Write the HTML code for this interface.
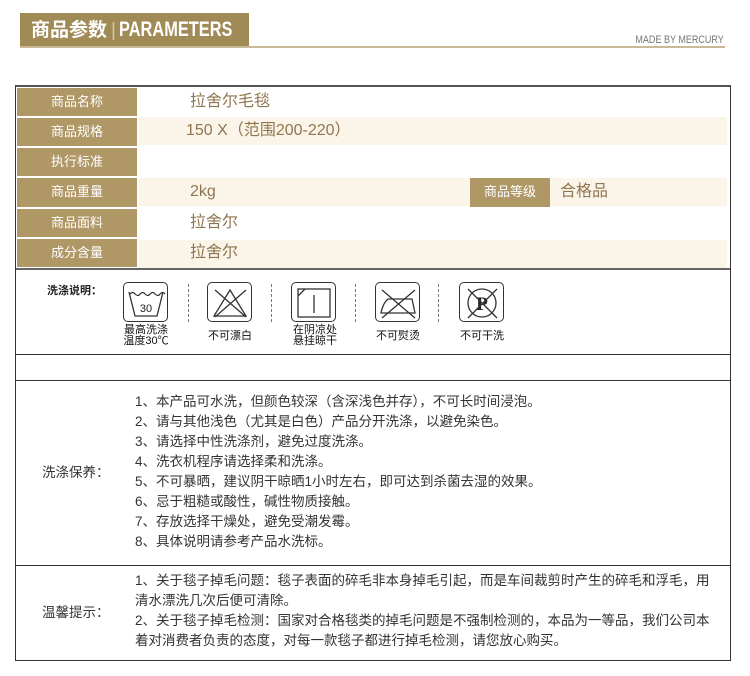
<!DOCTYPE html>
<html><head><meta charset="utf-8"><style>
*{margin:0;padding:0;box-sizing:border-box}
body{width:750px;height:676px;background:#fff;position:relative;font-family:"Liberation Sans","Noto Sans CJK SC",sans-serif;overflow:hidden}
.a{position:absolute}
.lab{position:absolute;left:17px;width:120px;height:28px;background:#b09766;color:#fff;font-size:13px;line-height:28px;text-align:center}
.val{position:absolute;left:190px;color:#8f7650;font-size:16px;line-height:28px}
.cream{position:absolute;left:139px;width:588px;height:28px;background:#fbf4e8}
.ic{position:absolute;top:282px;width:45px;height:40px;border:1.5px solid #333;border-radius:5px}
.ic svg{position:absolute;left:0;top:0}
.il{position:absolute;font-size:11px;color:#111;text-align:center;line-height:11px;width:70px}
.dash{position:absolute;top:284px;height:38px;border-left:1px dashed #777}
.txt{position:absolute;left:135px;font-size:13.5px;color:#333;line-height:20px}
</style></head><body>
<div class="a" style="left:20px;top:13px;width:229px;height:34px;background:#a08a56"></div>
<div class="a" style="left:31px;top:17px;color:#fff;font-size:19px;font-weight:bold;line-height:26px;white-space:nowrap">商品参数<span style="color:#d8c9a6;font-weight:normal;margin:0 3px 0 4px">|</span><span style="display:inline-block;font-size:21px;transform:scaleX(0.78);transform-origin:left center">PARAMETERS</span></div>
<div class="a" style="left:20px;top:46px;width:705px;height:2px;background:#c9b996"></div>
<div class="a" style="left:600px;top:34px;width:124px;text-align:right;font-size:11px;color:#777;white-space:nowrap"><span style="display:inline-block;transform:scaleX(0.82);transform-origin:right center">MADE BY MERCURY</span></div>

<div class="a" style="left:15px;top:85px;width:716px;height:576px;border:1px solid #333;border-top:2px solid #555"></div>
<div class="a" style="left:16px;top:268px;width:714px;height:2px;background:#666"></div>

<div class="cream" style="top:117px"></div>
<div class="cream" style="top:178px"></div>
<div class="cream" style="top:240px"></div>

<div class="lab" style="top:88px">商品名称</div>
<div class="lab" style="top:118px">商品规格</div>
<div class="lab" style="top:148px">执行标准</div>
<div class="lab" style="top:178px;height:29px">商品重量</div>
<div class="lab" style="top:209px">商品面料</div>
<div class="lab" style="top:239px">成分含量</div>
<div class="lab" style="top:178px;left:470px;width:80px;height:29px">商品等级</div>

<div class="val" style="top:88px">拉舍尔毛毯</div>
<div class="val" style="top:117px;left:186px">150 X（范围200-220）</div>
<div class="val" style="top:178px">2kg</div>
<div class="val" style="top:178px;left:560px">合格品</div>
<div class="val" style="top:209px">拉舍尔</div>
<div class="val" style="top:239px">拉舍尔</div>

<div class="a" style="left:47px;top:282px;font-size:11px;font-weight:bold;color:#222">洗涤说明：</div>

<div class="ic" style="left:123px"><svg width="45" height="40"><path d="M6 11 q3 -3 5 0 q3 3 5 0 q3 -3 5 0 q3 3 5 0 q3 -3 5 0 q3 3 5 0 q3-3 5 0" fill="none" stroke="#333" stroke-width="1.2"/><path d="M5 9 L11 33 L33 33 L39 9" fill="none" stroke="#333" stroke-width="1.3"/><text x="22" y="29" font-size="11" text-anchor="middle" font-family="Liberation Sans" fill="#222">30</text></svg></div>
<div class="dash" style="left:188px"></div>
<div class="ic" style="left:207px"><svg width="45" height="40"><path d="M6 33 L22 7 L38 33 Z" fill="none" stroke="#333" stroke-width="1.3"/><path d="M7 7 L38 34 M38 7 L7 34" stroke="#333" stroke-width="1.3"/></svg></div>
<div class="dash" style="left:271px"></div>
<div class="ic" style="left:291px"><svg width="45" height="40"><rect x="6" y="6" width="32" height="28" fill="none" stroke="#333" stroke-width="1.3"/><path d="M6 13 L13 6 M22 12 L22 30" stroke="#333" stroke-width="1.3"/></svg></div>
<div class="dash" style="left:355px"></div>
<div class="ic" style="left:375px"><svg width="45" height="40"><path d="M5 30 L39 30 L36 16 L12 16 Q7 20 5 30Z" fill="none" stroke="#333" stroke-width="1.3"/><path d="M6 7 L39 35 M39 7 L6 35" stroke="#333" stroke-width="1.3"/></svg></div>
<div class="dash" style="left:438px"></div>
<div class="ic" style="left:459px"><svg width="45" height="40"><circle cx="22" cy="20" r="14" fill="none" stroke="#333" stroke-width="1.3"/><text x="22" y="27" font-size="19" font-weight="bold" text-anchor="middle" font-family="Liberation Serif" fill="#222">P</text><path d="M8 6 L37 35 M37 6 L8 35" stroke="#333" stroke-width="1.3"/></svg></div>

<div class="il" style="left:111px;top:325px">最高洗涤<br>温度30℃</div>
<div class="il" style="left:195px;top:331px">不可漂白</div>
<div class="il" style="left:280px;top:325px">在阴凉处<br>悬挂晾干</div>
<div class="il" style="left:363px;top:331px">不可熨烫</div>
<div class="il" style="left:447px;top:331px">不可干洗</div>

<div class="a" style="left:16px;top:354px;width:714px;height:1px;background:#333"></div>
<div class="a" style="left:16px;top:380px;width:714px;height:1px;background:#333"></div>
<div class="a" style="left:16px;top:565px;width:714px;height:1px;background:#333"></div>

<div class="a" style="left:42px;top:461px;font-size:13.5px;color:#333">洗涤保养：</div>
<div class="txt" style="top:392px">1、本产品可水洗，但颜色较深（含深浅色并存），不可长时间浸泡。<br>2、请与其他浅色（尤其是白色）产品分开洗涤，以避免染色。<br>3、请选择中性洗涤剂，避免过度洗涤。<br>4、洗衣机程序请选择柔和洗涤。<br>5、不可暴晒，建议阴干晾晒1小时左右，即可达到杀菌去湿的效果。<br>6、忌于粗糙或酸性，碱性物质接触。<br>7、存放选择干燥处，避免受潮发霉。<br>8、具体说明请参考产品水洗标。</div>

<div class="a" style="left:42px;top:601px;font-size:13.5px;color:#333">温馨提示：</div>
<div class="txt" style="top:571px;width:590px">1、关于毯子掉毛问题：毯子表面的碎毛非本身掉毛引起，而是车间裁剪时产生的碎毛和浮毛，用<br>清水漂洗几次后便可清除。<br>2、关于毯子掉毛检测：国家对合格毯类的掉毛问题是不强制检测的，本品为一等品，我们公司本<br>着对消费者负责的态度，对每一款毯子都进行掉毛检测，请您放心购买。</div>
</body></html>
